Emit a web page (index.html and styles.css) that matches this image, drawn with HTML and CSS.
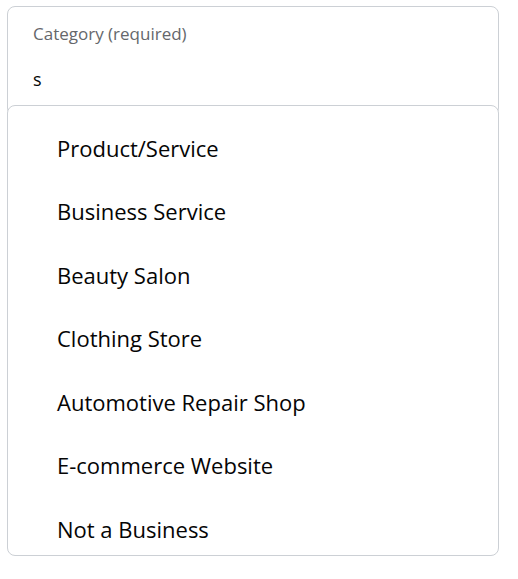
FILE: index.html
```html
<!DOCTYPE html>
<html lang="en">
<head>
  <meta charset="UTF-8">
  <meta name="viewport" content="width=device-width, initial-scale=1.0">
  <title>Category</title>
  <link rel="stylesheet" href="styles.css">
</head>
<body>
  <div class="picker">
    <div class="field">
      <label class="label">Category (required)</label>
      <div class="value">s</div>
    </div>

    <ul class="menu">
      <li>Product/Service</li>
      <li>Business Service</li>
      <li>Beauty Salon</li>
      <li>Clothing Store</li>
      <li>Automotive Repair Shop</li>
      <li>E-commerce Website</li>
      <li>Not a Business</li>
    </ul>
  </div>
</body>
</html>
```

FILE: styles.css
```css
body { margin: 0; padding: 6px 19px 23px 7px; background: #fff; font-family: "Open Sans", "Noto Sans", sans-serif; color: #1c1e21; }
.field { height: 110px; border: 1px solid #ccd0d5; border-radius: 8px; padding: 16px 25px 0; box-sizing: border-box; }
.label { display: block; font-size: 17px; line-height: 22px; color: #65676b; }
.value { margin-top: 23px; font-size: 18px; line-height: 22px; color: #050505; }
.menu { position: relative; margin: -11px 0 0; height: 451px; box-sizing: border-box; padding: 10px 0 0; list-style: none; background: #fff; border: 1px solid #ccd0d5; border-radius: 8px; overflow: hidden; }
.menu li { height: 63.5px; display: flex; align-items: center; padding-left: 49px; font-size: 22px; color: #050505; }
```
